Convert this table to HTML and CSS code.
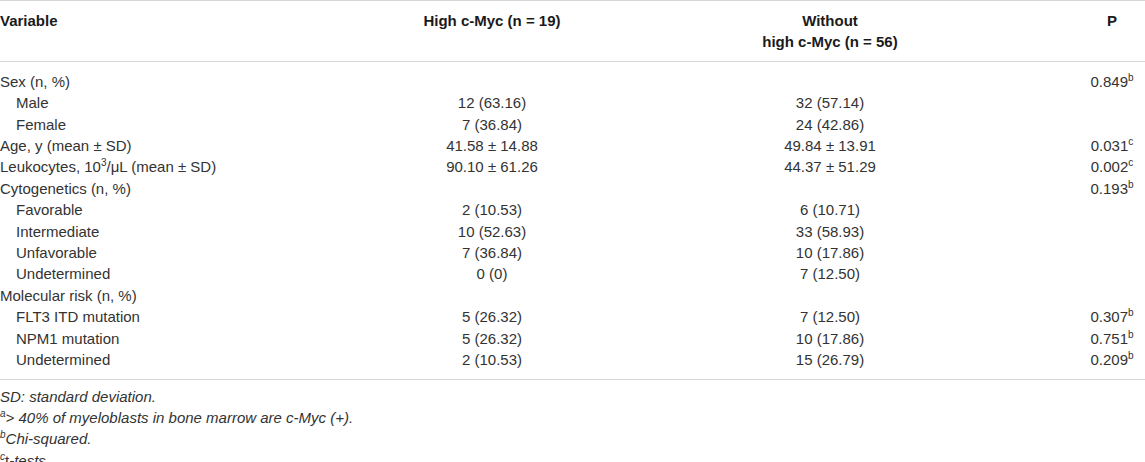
FILE: index.html
```html
<!DOCTYPE html>
<html>
<head>
<meta charset="utf-8">
<link rel="stylesheet" href="styles.css">
</head>
<body>
<table class="tbl">
  <colgroup>
    <col class="c1"><col class="c2"><col class="c3"><col class="c4">
  </colgroup>
  <thead>
    <tr>
      <th class="left">Variable</th>
      <th>High c-Myc (n = 19)</th>
      <th>Without<br>high c-Myc (n = 56)</th>
      <th>P</th>
    </tr>
  </thead>
  <tbody>
    <tr><td class="left">Sex (n, %)</td><td></td><td></td><td>0.849<sup>b</sup></td></tr>
    <tr><td class="left sub">Male</td><td>12 (63.16)</td><td>32 (57.14)</td><td></td></tr>
    <tr><td class="left sub">Female</td><td>7 (36.84)</td><td>24 (42.86)</td><td></td></tr>
    <tr><td class="left">Age, y (mean ± SD)</td><td>41.58 ± 14.88</td><td>49.84 ± 13.91</td><td>0.031<sup>c</sup></td></tr>
    <tr><td class="left">Leukocytes, 10<sup>3</sup>/μL (mean ± SD)</td><td>90.10 ± 61.26</td><td>44.37 ± 51.29</td><td>0.002<sup>c</sup></td></tr>
    <tr><td class="left">Cytogenetics (n, %)</td><td></td><td></td><td>0.193<sup>b</sup></td></tr>
    <tr><td class="left sub">Favorable</td><td>2 (10.53)</td><td>6 (10.71)</td><td></td></tr>
    <tr><td class="left sub">Intermediate</td><td>10 (52.63)</td><td>33 (58.93)</td><td></td></tr>
    <tr><td class="left sub">Unfavorable</td><td>7 (36.84)</td><td>10 (17.86)</td><td></td></tr>
    <tr><td class="left sub">Undetermined</td><td>0 (0)</td><td>7 (12.50)</td><td></td></tr>
    <tr><td class="left">Molecular risk (n, %)</td><td></td><td></td><td></td></tr>
    <tr><td class="left sub">FLT3 ITD mutation</td><td>5 (26.32)</td><td>7 (12.50)</td><td>0.307<sup>b</sup></td></tr>
    <tr><td class="left sub">NPM1 mutation</td><td>5 (26.32)</td><td>10 (17.86)</td><td>0.751<sup>b</sup></td></tr>
    <tr><td class="left sub">Undetermined</td><td>2 (10.53)</td><td>15 (26.79)</td><td>0.209<sup>b</sup></td></tr>
  </tbody>
</table>
<div class="notes">
  <p>SD: standard deviation.</p>
  <p><sup>a</sup>&gt; 40% of myeloblasts in bone marrow are c-Myc (+).</p>
  <p><sup>b</sup>Chi-squared.</p>
  <p><sup>c</sup><span class="up">t</span>-tests.</p>
</div>
</body>
</html>
```
FILE: styles.css
```css
html, body {
  margin: 0;
  padding: 0;
  background: #fff;
}
body {
  font-family: "Liberation Sans", Arial, sans-serif;
  font-size: 15px;
  line-height: 21.4px;
  color: #333;
}
.tbl {
  width: 1145px;
  border-collapse: collapse;
  table-layout: fixed;
}
.c1 { width: 403px; }
.c2 { width: 178px; }
.c3 { width: 498px; }
.c4 { width: 66px; }
.tbl th, .tbl td {
  padding: 0;
  text-align: center;
  vertical-align: top;
  white-space: nowrap;
}
.tbl th {
  font-weight: bold;
  color: #1a1a1a;
  padding-top: 9px;
  padding-bottom: 8px;
}
.tbl thead tr {
  border-top: 1px solid #d6d6d6;
  border-bottom: 1px solid #d6d6d6;
}
.tbl tbody tr:first-child td { padding-top: 9px; }
.tbl tbody tr:last-child td { padding-bottom: 8px; }
.tbl tbody { border-bottom: 1px solid #d6d6d6; }
.tbl .left { text-align: left; }
.tbl .sub { padding-left: 16px; }
sup {
  font-size: 10px;
  line-height: 0;
  vertical-align: 6px;
}
.notes {
  padding-top: 6px;
  font-style: italic;
}
.notes p { margin: 0; }
.notes .up { font-style: normal; }
```
